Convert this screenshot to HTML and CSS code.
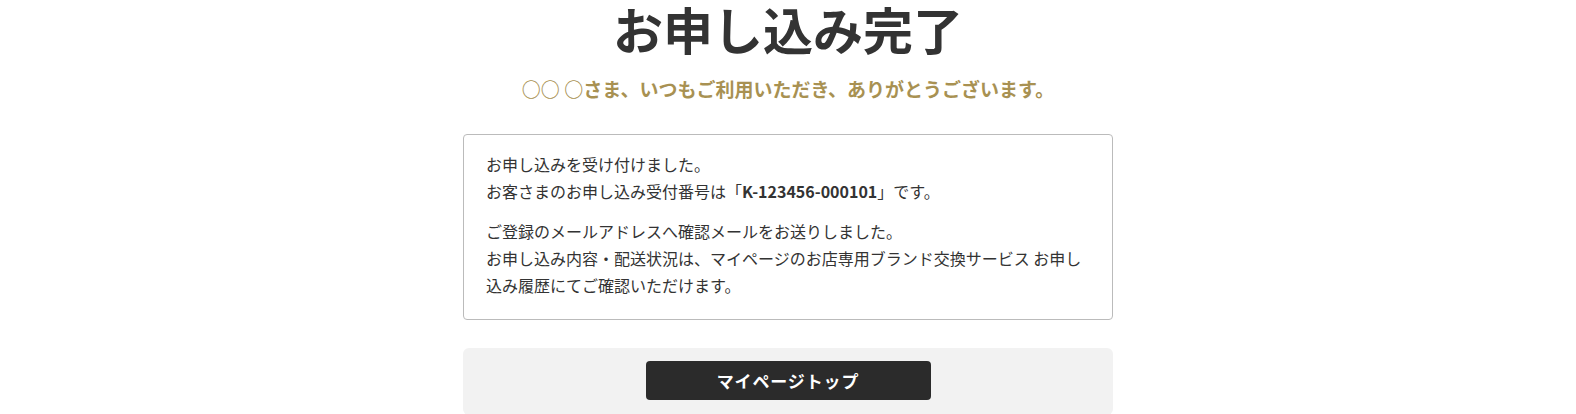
FILE: index.html
```html
<!DOCTYPE html>
<html lang="ja">
<head>
    <meta charset="UTF-8">
    <meta name="viewport" content="width=device-width, initial-scale=1.0">
    <title>お申し込み完了</title>
    <link rel="stylesheet" href="styles.css">
</head>
<body>
    <div class="container">
        <h1 class="page-title">お申し込み完了</h1>
        <p class="greeting">○○ ○さま、いつもご利用いただき、ありがとうございます。</p>

        <!-- Completion message -->
        <div class="message-box">
            <p>お申し込みを受け付けました。<br>お客さまのお申し込み受付番号は「<strong>K-123456-000101</strong>」です。</p>
            <p>ご登録のメールアドレスへ確認メールをお送りしました。<br>お申し込み内容・配送状況は、マイページのお店専用ブランド交換サービス お申し込み履歴にてご確認いただけます。</p>
        </div>

        <div class="button-area">
            <a href="#" class="btn-primary">マイページトップ</a>
        </div>
    </div>
</body>
</html>
```

FILE: styles.css
```css
body {
    font-family: "Noto Sans CJK JP", "Noto Sans", sans-serif;
    color: #333;
    background-color: #fff;
    margin: 0;
    padding: 0;
}

.container {
    width: 650px;
    margin: 0 auto;
}

.page-title {
    font-size: 50px;
    font-weight: bold;
    line-height: 56px;
    text-align: center;
    margin: 0;
}

.greeting {
    font-size: 19px;
    font-weight: bold;
    line-height: 28px;
    color: #a89152;
    text-align: center;
    margin: 19px 0 31px;
}

.message-box {
    border: 1px solid #bbb;
    border-radius: 4px;
    padding: 16px 22px 20px;
}

.message-box p {
    font-size: 16px;
    line-height: 27px;
    margin: 0;
}

.message-box p + p {
    margin-top: 13px;
}

.button-area {
    margin-top: 28px;
    background-color: #f2f2f2;
    border-radius: 6px;
    padding: 13px 0 15px;
    display: flex;
    justify-content: center;
}

.btn-primary {
    display: block;
    width: 285px;
    height: 39px;
    line-height: 39px;
    background-color: #2b2b2b;
    color: #fff;
    border-radius: 4px;
    text-align: center;
    text-decoration: none;
    font-size: 17px;
    letter-spacing: 0.05em;
    font-weight: bold;
}
```
